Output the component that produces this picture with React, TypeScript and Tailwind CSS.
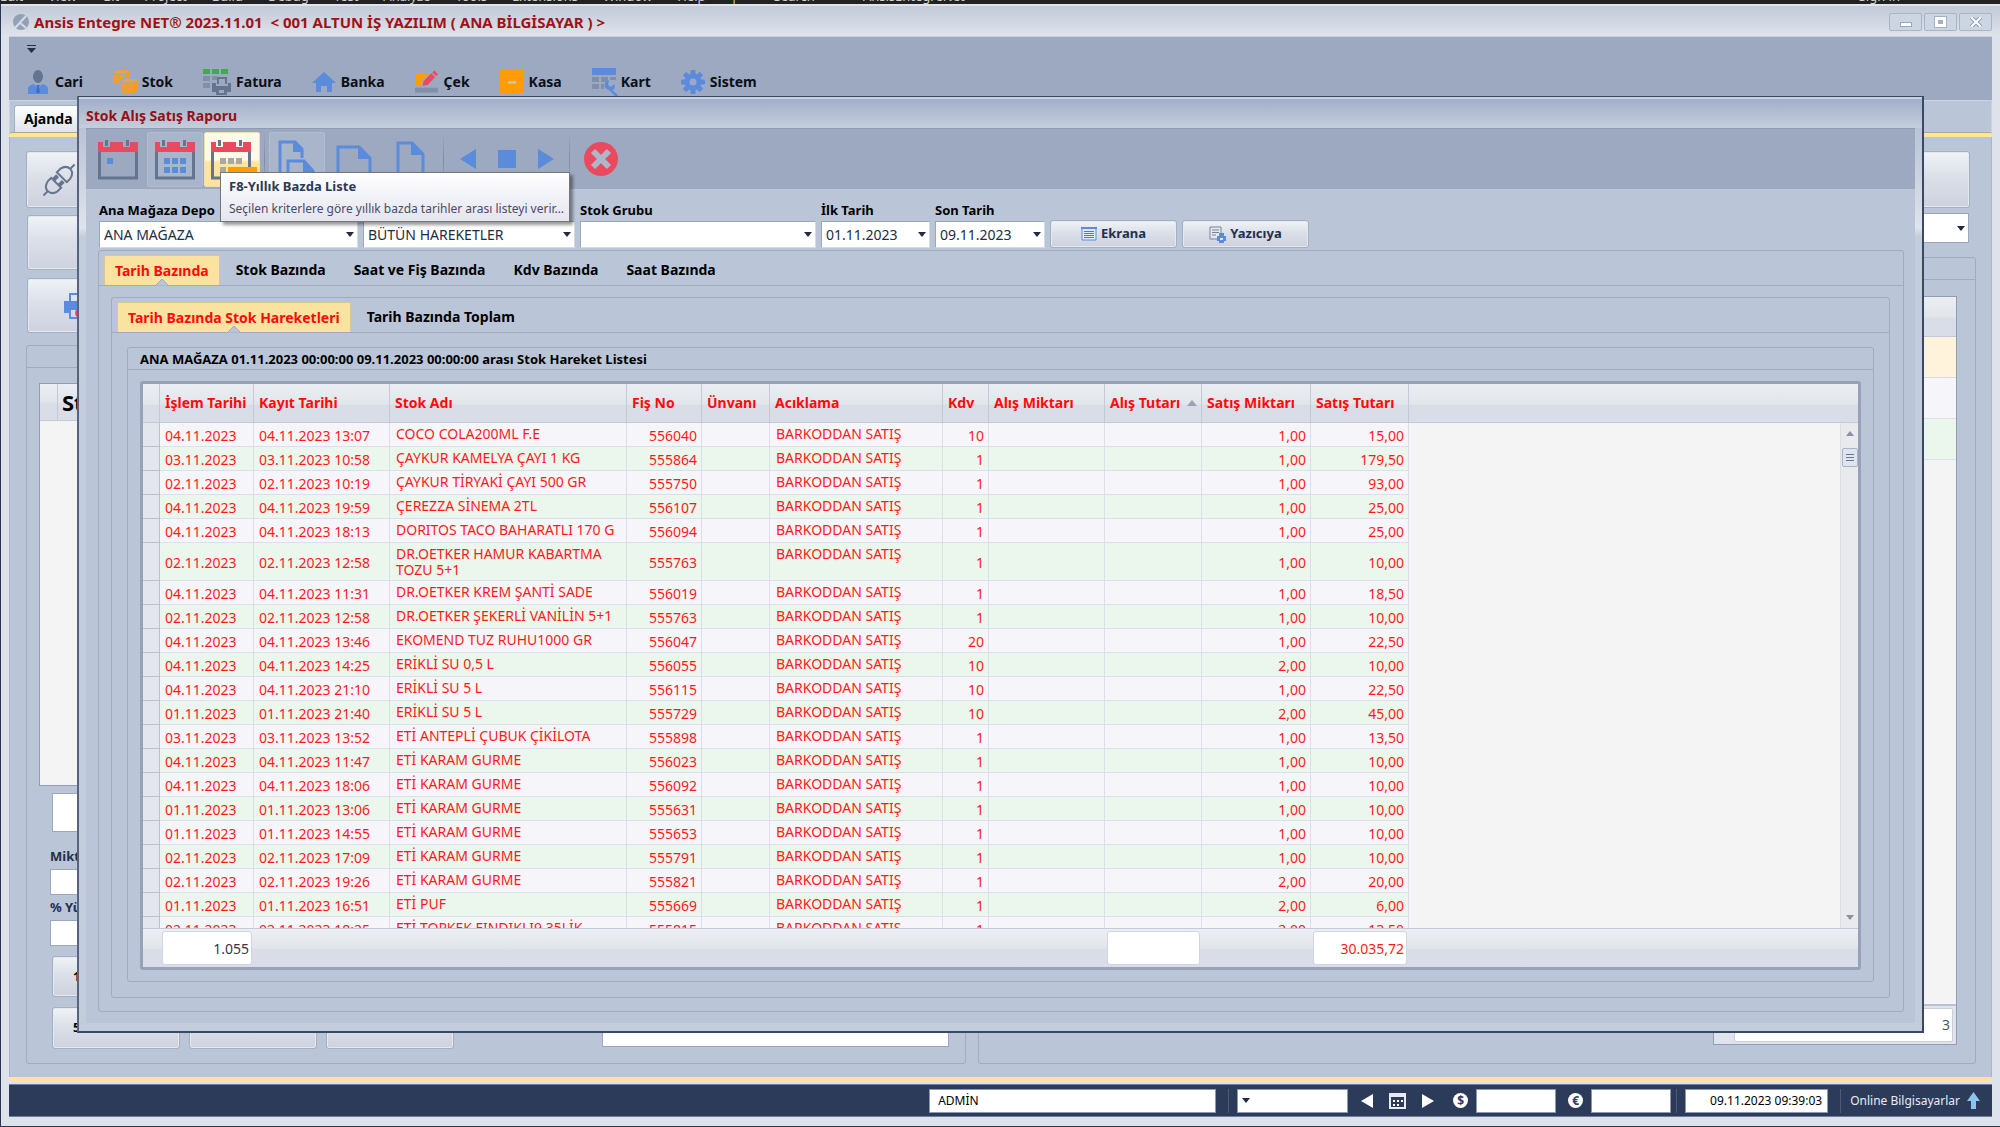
import React from 'react';

const BLUE = '#5b8bdc';
const SLATE = '#66758f';
const RED = '#ea4a5f';
const ORANGE = '#ff9c07';

const menuItems = [
    { label: 'Cari', icon: <UserIcon /> },
    { label: 'Stok', icon: <BoxesIcon /> },
    { label: 'Fatura', icon: <InvoiceIcon /> },
    { label: 'Banka', icon: <HomeIcon /> },
    { label: 'Çek', icon: <ChequeIcon /> },
    { label: 'Kasa', icon: <SafeIcon /> },
    { label: 'Kart', icon: <CardIcon /> },
    { label: 'Sistem', icon: <GearIcon /> },
];

const rows = [
    ['04.11.2023', '04.11.2023 13:07', 'COCO COLA200ML F.E', '556040', '10', '1,00', '15,00'],
    ['03.11.2023', '03.11.2023 10:58', 'ÇAYKUR KAMELYA ÇAYI 1 KG', '555864', '1', '1,00', '179,50'],
    ['02.11.2023', '02.11.2023 10:19', 'ÇAYKUR TİRYAKİ ÇAYI 500 GR', '555750', '1', '1,00', '93,00'],
    ['04.11.2023', '04.11.2023 19:59', 'ÇEREZZA SİNEMA 2TL', '556107', '1', '1,00', '25,00'],
    ['04.11.2023', '04.11.2023 18:13', 'DORITOS TACO BAHARATLI 170 G', '556094', '1', '1,00', '25,00'],
    ['02.11.2023', '02.11.2023 12:58', 'DR.OETKER HAMUR KABARTMA TOZU 5+1', '555763', '1', '1,00', '10,00'],
    ['04.11.2023', '04.11.2023 11:31', 'DR.OETKER KREM ŞANTİ SADE', '556019', '1', '1,00', '18,50'],
    ['02.11.2023', '02.11.2023 12:58', 'DR.OETKER ŞEKERLİ VANİLİN 5+1', '555763', '1', '1,00', '10,00'],
    ['04.11.2023', '04.11.2023 13:46', 'EKOMEND TUZ RUHU1000 GR', '556047', '20', '1,00', '22,50'],
    ['04.11.2023', '04.11.2023 14:25', 'ERİKLİ SU 0,5 L', '556055', '10', '2,00', '10,00'],
    ['04.11.2023', '04.11.2023 21:10', 'ERİKLİ SU 5 L', '556115', '10', '1,00', '22,50'],
    ['01.11.2023', '01.11.2023 21:40', 'ERİKLİ SU 5 L', '555729', '10', '2,00', '45,00'],
    ['03.11.2023', '03.11.2023 13:52', 'ETİ ANTEPLİ ÇUBUK ÇİKİLOTA', '555898', '1', '1,00', '13,50'],
    ['04.11.2023', '04.11.2023 11:47', 'ETİ KARAM GURME', '556023', '1', '1,00', '10,00'],
    ['04.11.2023', '04.11.2023 18:06', 'ETİ KARAM GURME', '556092', '1', '1,00', '10,00'],
    ['01.11.2023', '01.11.2023 13:06', 'ETİ KARAM GURME', '555631', '1', '1,00', '10,00'],
    ['01.11.2023', '01.11.2023 14:55', 'ETİ KARAM GURME', '555653', '1', '1,00', '10,00'],
    ['02.11.2023', '02.11.2023 17:09', 'ETİ KARAM GURME', '555791', '1', '1,00', '10,00'],
    ['02.11.2023', '02.11.2023 19:26', 'ETİ KARAM GURME', '555821', '1', '2,00', '20,00'],
    ['01.11.2023', '01.11.2023 16:51', 'ETİ PUF', '555669', '1', '2,00', '6,00'],
    ['02.11.2023', '02.11.2023 18:25', 'ETİ TOPKEK FINDIKLI9 35LİK', '555815', '1', '2,00', '13,50'],
];

const headers = ['İşlem Tarihi', 'Kayıt Tarihi', 'Stok Adı', 'Fiş No', 'Ünvanı', 'Acıklama', 'Kdv', 'Alış Miktarı', 'Alış Tutarı', 'Satış Miktarı', 'Satış Tutarı'];

const raised = 'border border-[#a3afc3] rounded-[3px] bg-gradient-to-b from-[#f0f3f6] via-[#d9dee7] to-[#cdd2df] shadow-[inset_0_0_0_1px_#e6eaf0]';
const panel = 'border border-[#9eabc0] rounded-[3px]';
const headFill = 'bg-gradient-to-b from-[#ebeff3] from-0% via-[#e2e6eb] via-50% to-[#d9dde7] to-55%';

function UserIcon() {
    return (
        <svg viewBox="0 0 24 24" className="w-6 h-6">
            <ellipse cx="12" cy="6.500" rx="5" ry="6.500" fill={SLATE} />
            <path d="M2 24v-5c0-3 3-4 6-5l4 5 4-5c3 1 6 2 6 5v5z" fill={BLUE} />
            <path d="M10 15h4l-1 2 1 5-2 2-2-2 1-5z" fill="#416fbd" />
        </svg>
    );
}

function BoxesIcon() {
    return (
        <svg viewBox="0 0 24 24" className="w-6 h-6">
            <path d="M0 4l11 1v9H0z" fill="#e9a034" />
            <path d="M1 3l3-3h12l-4 4z" fill="#e0a654" />
            <path d="M12 5l4-4v7h-4z" fill={ORANGE} />
            <path d="M7 11l5-3h12v16H7z" fill="#9ca9c1" />
            <path d="M8 13l12 1v10H8z" fill="#e9a034" />
            <path d="M9 12l3-3h12l-4 4z" fill="#e0a654" />
            <path d="M21 14l3-4v10l-3 4z" fill={ORANGE} />
        </svg>
    );
}

function InvoiceIcon() {
    return (
        <svg viewBox="0 0 28 26" className="w-7 h-[26px]">
            <path d="M0 0h7v5H0zM9 0h7v5H9zM18 0h7v5h-7z" fill="#46a84c" />
            <path d="M0 7h7v5H0zM0 14h7v5H0zM9 7h5v4H9z" fill="#8090ab" />
            <path d="M14 8h10v7h-2v-5h-6v5h-2z" fill={SLATE} />
            <path d="M9 14h4v3h12v-3h3v9h-4v3H13v-3H9z" fill={SLATE} />
            <path d="M16 21h5v3h-5z" fill="#9ca9c1" />
        </svg>
    );
}

function HomeIcon() {
    return (
        <svg viewBox="0 0 24 24" className="w-6 h-6">
            <path d="M12 2l12 11h-4v9h-5v-6H9v6H4v-9H0z" fill={BLUE} />
        </svg>
    );
}

function ChequeIcon() {
    return (
        <svg viewBox="0 0 25 24" className="w-6 h-6">
            <path d="M0 3h15L8 10l-1 5H0z" fill={ORANGE} />
            <path d="M0 18h24v5H0z" fill="#8090ab" />
            <path d="M8 16l1-5 8-8 4 4-8 8z" fill={RED} />
            <path d="M18 2l2-2 4 4-2 2z" fill={RED} />
        </svg>
    );
}

function SafeIcon() {
    return (
        <svg viewBox="0 0 24 24" className="w-6 h-6">
            <path d="M0 0h24v5H0zM0 6h24v18H0z" fill={ORANGE} />
            <path d="M8 11h8v3H8z" fill="#c9c3a8" />
        </svg>
    );
}

function CardIcon() {
    return (
        <svg viewBox="0 0 24 28" className="w-6 h-7 overflow-visible">
            <path d="M0 0h24v7H0z" fill={BLUE} />
            <path d="M0 9h7v5H0zM9 9h7v5H9zM18 9h6v3h-6zM0 16h7v5H0zM9 16h3v5H9z" fill="#8090ab" />
            <path d="M17 12l-1 5 3 2 3-3c2 3 0 6-2 6l6 5-2 2-7-7c-6-1-6-9 0-10z" fill={BLUE} />
        </svg>
    );
}

function GearIcon() {
    return (
        <svg viewBox="0 0 24 24" className="w-6 h-6">
            <g fill={BLUE}>
                {[0, 45, 90, 135].map((a) => (
                    <rect key={a} x="9.500" y="0" width="5" height="24" rx="1" transform={`rotate(${a} 12 12)`} />
                ))}
                <circle cx="12" cy="12" r="8.500" />
            </g>
            <circle cx="12" cy="12" r="3.500" fill="#9ca9c1" />
        </svg>
    );
}

const CalendarIcon = ({ days, dayColor = BLUE, bar = false }: { days: number[][]; dayColor?: string; bar?: boolean }) => (
    <svg viewBox="0 0 42 40" className="w-[42px] h-10 overflow-visible">
        <path d="M1 2h5v5h7V2h13v5h7V2h8v10H1z" fill={RED} />
        <path d="M8 0h3v6H8zM29 0h3v6h-3z" fill={SLATE} />
        <path d="M2.500 12v26h37V12" fill="none" stroke={SLATE} strokeWidth="3" />
        {days.map(([x, y]) => (
            <rect key={`${x}-${y}`} x={x} y={y} width="6" height="6" fill={dayColor} />
        ))}
        {bar && <path d="M18 27h29v13H18z" fill={ORANGE} />}
    </svg>
);

const monthDays = [[10, 18], [18, 18], [26, 18], [10, 27], [18, 27], [26, 27]];

const Caret = () => (
    <svg viewBox="0 0 8 5" className="w-2 h-[5px] mr-[3px] shrink-0 pointer-events-none">
        <path d="M0 0h8L4 5z" fill="#1f2b42" />
    </svg>
);

const Combo = ({ id, label, value, width }: { id: string; label?: string; value: string; width: string }) => (
    <div className={`${width} shrink-0`}>
        {label && <label htmlFor={id} className="block h-[18px] text-[13px] leading-[18px] font-bold text-black whitespace-nowrap">{label}</label>}
        <div className="mt-[2px] h-[27px] flex items-center bg-white border border-[#9aa7bd] border-r-[#d5dbe5] border-b-[#d5dbe5]">
            <select id={id} aria-label={label ?? 'Hareket türü'} className="flex-1 min-w-0 h-full pl-1 appearance-none outline-none text-sm text-[#222d42]">
                <option>{value}</option>
            </select>
            <Caret />
        </div>
    </div>
);

const Tabs = ({ items }: { items: string[] }) => (
    <div role="tablist" className="flex gap-1 pl-[5px] pt-1 border-b border-[#9eabc0]">
        {items.map((t, i) => (
            <button
                key={t}
                role="tab"
                aria-selected={i === 0}
                className={i === 0
                    ? 'relative h-[30px] px-[10px] rounded-t-[2px] border border-b-0 border-[#d9c78e] bg-[#fae2a0] text-sm font-bold text-[#ff0a0a]'
                    : 'h-[30px] px-3 text-sm font-bold text-black'}
            >
                {t}
                {i === 0 && (
                    <svg viewBox="0 0 14 8" className="absolute left-1/2 -bottom-px -ml-[7px] w-[14px] h-2">
                        <path d="M0 8l7-7 7 7z" fill="#bac6d8" stroke="#9eabc0" />
                    </svg>
                )}
            </button>
        ))}
    </div>
);

const Cols = () => (
    <colgroup>
        <col className="w-[17px]" />
        <col className="w-[94px]" />
        <col className="w-[136px]" />
        <col className="w-[237px]" />
        <col className="w-[75px]" />
        <col className="w-[68px]" />
        <col className="w-[173px]" />
        <col className="w-[46px]" />
        <col className="w-[116px]" />
        <col className="w-[97px]" />
        <col className="w-[109px]" />
        <col className="w-[98px]" />
        <col />
    </colgroup>
);

const tableBase = 'w-full table-fixed border-separate border-spacing-0';
const cell = 'h-6 pt-[3px] pb-0 pl-[5px] pr-1 border-r border-b border-[#dcdfea] leading-[18px] whitespace-nowrap';
const textCell = 'h-6 pt-[3px] pb-[2px] px-[6px] border-r border-b border-[#dcdfea] leading-4 align-top';

const StockGrid = () => (
    <div className="border-[3px] border-[#95a2b9] rounded-[3px] bg-[#f4f4f4] text-sm text-[#ff1a1a]">
        <table className={tableBase}>
            <Cols />
            <thead>
                <tr className={headFill}>
                    <th className="h-[39px] border-r border-b border-[#c3c9d9]" />
                    {headers.map((h) => (
                        <th key={h} className="h-[39px] pl-[5px] pr-1 border-r border-b border-[#c3c9d9] text-left font-bold text-[#ff0a0a] whitespace-nowrap">
                            {h === 'Alış Tutarı' ? (
                                <span className="flex items-center justify-between">
                                    {h}
                                    <svg viewBox="0 0 10 6" className="w-[10px] h-[6px]"><path d="M0 6h10L5 0z" fill="#9aa1b3" /></svg>
                                </span>
                            ) : h}
                        </th>
                    ))}
                    <th className="h-[39px] border-b border-[#c3c9d9]" />
                </tr>
            </thead>
        </table>
        <div className="flex h-[505px] overflow-hidden">
            <div className="flex-1">
                <table className={tableBase}>
                    <Cols />
                    <tbody>
                        {rows.map((r, i) => (
                            <tr key={i} className={i % 2 ? 'bg-[#ebf6ed]' : 'bg-[#f6f6fa]'}>
                                <td className="h-6 bg-[#e3e6ec] border-r border-b border-[#b9c1d1]" />
                                <td className={cell}>{r[0]}</td>
                                <td className={cell}>{r[1]}</td>
                                <td className={textCell}>{r[2]}</td>
                                <td className={`${cell} text-right`}>{r[3]}</td>
                                <td className={cell} />
                                <td className={textCell}>BARKODDAN SATIŞ</td>
                                <td className={`${cell} text-right`}>{r[4]}</td>
                                <td className={cell} />
                                <td className={cell} />
                                <td className={`${cell} text-right`}>{r[5]}</td>
                                <td className={`${cell} text-right`}>{r[6]}</td>
                                <td className="bg-[#f4f4f4]" />
                            </tr>
                        ))}
                    </tbody>
                </table>
            </div>
            <div className="w-[18px] flex flex-col items-center bg-[#e8eaed] border-l border-[#dcdee3] pt-2 pb-2">
                <svg viewBox="0 0 8 5" className="w-2 h-[5px]"><path d="M0 5h8L4 0z" fill="#8a91a5" /></svg>
                <div className="mt-3 w-4 h-[19px] flex flex-col justify-center items-center gap-[2px] rounded-[2px] border border-[#aab3c4] bg-[#dfe5ee]">
                    <span className="w-2 h-px bg-[#6c7690]" />
                    <span className="w-2 h-px bg-[#6c7690]" />
                    <span className="w-2 h-px bg-[#6c7690]" />
                </div>
                <svg viewBox="0 0 8 5" className="w-2 h-[5px] mt-auto"><path d="M0 0h8L4 5z" fill="#8a91a5" /></svg>
            </div>
        </div>
        <div className={`${headFill} border-t border-[#c3cbdb]`}>
            <table className={tableBase}>
                <Cols />
                <tbody>
                    <tr>
                        <td />
                        <td className="h-[38px] pl-[2px] pr-[2px]">
                            <div className="h-[34px] pr-[2px] leading-[34px] text-right rounded-[3px] border border-[#d0d5de] bg-white text-[#30394b]">1.055</div>
                        </td>
                        <td colSpan={6} />
                        <td />
                        <td className="pl-[2px] pr-[2px]"><div className="h-[34px] rounded-[3px] border border-[#d0d5de] bg-white" /></td>
                        <td />
                        <td className="pl-[2px] pr-[2px]">
                            <div className="h-[34px] pr-[2px] leading-[34px] text-right rounded-[3px] border border-[#d0d5de] bg-white">30.035,72</div>
                        </td>
                        <td />
                    </tr>
                </tbody>
            </table>
        </div>
    </div>
);

const ToolSeparator = () => <span className="w-px h-14 bg-gradient-to-b from-[#9ca9c1] via-[#7f8ca5] to-[#9ca9c1]" />;

const Toolbar = () => (
    <div className="h-[61px] flex items-start bg-[#9ca9c1] border-t border-[#8e9bb5] pt-[3px]">
        <button aria-label="Günlük" className="ml-[3px] w-[57px] h-[55px] flex justify-center items-center">
            <CalendarIcon days={[[10, 18]]} />
        </button>
        <button aria-label="Aylık" className="w-14 h-[55px] ml-px flex justify-center items-center border border-[#b3bdcf] bg-[#a9b5ca] rounded-[2px]">
            <CalendarIcon days={monthDays} />
        </button>
        <div className="relative ml-px">
            <button aria-label="F8-Yıllık Bazda Liste" className="w-14 h-[55px] pr-[2px] flex justify-center items-center rounded-[2px] border border-[#efe0b4] bg-gradient-to-b from-[#fff9e8] from-50% to-[#ffe59b] to-55%">
                <CalendarIcon days={monthDays} dayColor="#a9a8a6" bar />
            </button>
            <div role="tooltip" className="absolute z-10 left-4 top-10 w-[350px] h-[50px] border border-[#767676] bg-gradient-to-b from-white to-[#e4e5f0] shadow-[3px_3px_3px_rgba(0,0,0,0.4)] px-2 pt-[3px] text-[#2b3a55] whitespace-nowrap">
                <p className="text-[13px] leading-5 font-bold">F8-Yıllık Bazda Liste</p>
                <p className="mt-[3px] text-xs leading-5 text-[#4a4a68]">Seçilen kriterlere göre yıllık bazda tarihler arası listeyi verir…</p>
            </div>
        </div>
        <span className="w-[9px] flex justify-center"><ToolSeparator /></span>
        <button aria-label="Kopyala" className="w-14 h-[55px] flex justify-center items-center border border-[#b3bdcf] bg-[#a9b5ca] rounded-[2px]">
            <svg viewBox="0 0 38 42" className="w-[38px] h-[42px]">
                <path d="M9 36H2V3h15l7 7v9M10 42V22h16l9 10v10" fill="none" stroke={BLUE} strokeWidth="3" />
                <path d="M15 2v11h11zM25 21v12h12z" fill={BLUE} />
            </svg>
        </button>
        <button aria-label="Yatay sayfa" className="ml-[11px] mt-3">
            <svg viewBox="0 0 36 32" className="w-9 h-8">
                <path d="M2 32V3h21l11 11v18M2 30h32" fill="none" stroke={BLUE} strokeWidth="3" />
                <path d="M22 2v13h13z" fill={BLUE} />
            </svg>
        </button>
        <button aria-label="Dikey sayfa" className="ml-6 mt-2">
            <svg viewBox="0 0 30 40" className="w-[30px] h-10">
                <path d="M2 40V3h14l11 11v26M2 38h25" fill="none" stroke={BLUE} strokeWidth="3" />
                <path d="M15 2v13h13z" fill={BLUE} />
            </svg>
        </button>
        <span className="w-[34px] flex justify-center"><ToolSeparator /></span>
        <button aria-label="Önceki" className="mt-[17px]"><svg viewBox="0 0 16 20" className="w-4 h-5"><path d="M16 0v20L0 10z" fill={BLUE} /></svg></button>
        <button aria-label="Durdur" className="ml-[22px] mt-[18px]"><svg viewBox="0 0 18 18" className="w-[18px] h-[18px]"><path d="M0 0h18v18H0z" fill={BLUE} /></svg></button>
        <button aria-label="Sonraki" className="ml-[22px] mt-[17px]"><svg viewBox="0 0 16 20" className="w-4 h-5"><path d="M0 0v20l16-10z" fill={BLUE} /></svg></button>
        <span className="w-[30px] flex justify-center"><ToolSeparator /></span>
        <button aria-label="Kapat" className="mt-[10px]">
            <svg viewBox="0 0 34 34" className="w-[34px] h-[34px]">
                <circle cx="17" cy="17" r="17" fill={RED} />
                <path d="M9 9l16 16M25 9L9 25" stroke="#aeb6c9" strokeWidth="6" />
            </svg>
        </button>
    </div>
);

const ReportDialog = () => (
    <section role="dialog" aria-label="Stok Alış Satış Raporu" className="absolute left-[77px] right-[76px] top-24 border-2 border-t border-[#3a4868] border-l-[#56647f] bg-gradient-to-b from-[#b4bfd3] from-2% via-[#dfe4ec] via-14% to-[#c3ccdb] to-15%">
        <h2 className="h-[31px] pl-[7px] pt-px border-t-2 border-[#c9d1df] bg-gradient-to-b from-[#a2afc9] to-[#c5cedc] text-sm leading-8 font-bold text-[#960f17]">Stok Alış Satış Raporu</h2>
        <div className="mx-[7px] mb-2 pb-[11px] bg-[#bac6d8]">
            <Toolbar />
            <div className="pl-[13px] pt-3 flex items-end gap-[5px]">
                <Combo id="depo" label="Ana Mağaza Depo" value="ANA MAĞAZA" width="w-[259px]" />
                <Combo id="hareket" value="BÜTÜN HAREKETLER" width="w-[212px]" />
                <Combo id="grup" label="Stok Grubu" value="" width="w-[236px]" />
                <Combo id="ilk" label="İlk Tarih" value="01.11.2023" width="w-[109px]" />
                <Combo id="son" label="Son Tarih" value="09.11.2023" width="w-[110px]" />
                <button className={`${raised} w-[127px] h-7 flex items-center justify-center gap-1 text-[13px] font-bold text-[#22304e]`}>
                    <svg viewBox="0 0 16 14" className="w-4 h-[14px]">
                        <path d="M1 1h14v12H1z" fill="#e5eaf2" stroke={BLUE} />
                        <path d="M0 0h16v2H0z" fill={BLUE} />
                        <path d="M3 4.500h10M3 6.500h10M3 8.500h10M3 10.500h10" stroke="#6a7890" />
                    </svg>
                    Ekrana
                </button>
                <button className={`${raised} w-[127px] h-7 flex items-center justify-center gap-1 text-[13px] font-bold text-[#22304e]`}>
                    <svg viewBox="0 0 17 17" className="w-[17px] h-[17px]">
                        <path d="M1 1h11v12H1z" fill="#e5eaf2" stroke="#77839a" />
                        <path d="M3 4h7M3 6.500h7M3 9h4" stroke="#77839a" />
                        <path d="M8 10h9v5H8zM10 7h5v3h-5zM10 15h5v2h-5z" fill={BLUE} />
                        <path d="M11 12h3v2h-3z" fill="#dbe6f7" />
                    </svg>
                    Yazıcıya
                </button>
            </div>
            <div className={`${panel} mt-[2px] ml-3 mr-[11px]`}>
                <Tabs items={['Tarih Bazında', 'Stok Bazında', 'Saat ve Fiş Bazında', 'Kdv Bazında', 'Saat Bazında']} />
                <div className={`${panel} ml-3 mr-[13px] mt-[11px] mb-[13px]`}>
                    <Tabs items={['Tarih Bazında Stok Hareketleri', 'Tarih Bazında Toplam']} />
                    <div className={`${panel} mx-[15px] mt-[14px] mb-[15px]`}>
                        <h3 className="h-[22px] pl-3 border-b border-[#9eabc0] text-[13px] leading-[22px] font-bold text-black">ANA MAĞAZA 01.11.2023 00:00:00 09.11.2023 00:00:00 arası Stok Hareket Listesi</h3>
                        <div className="mx-3 my-[11px]">
                            <StockGrid />
                        </div>
                    </div>
                </div>
            </div>
        </div>
    </section>
);

const SideField = ({ label, id }: { label: string; id: string }) => (
    <div className="ml-[23px] mt-1">
        <label htmlFor={id} className="block text-[13px] leading-4 font-bold text-[#22304e]">{label}</label>
        <input id={id} className="mt-[5px] block w-40 h-[26px] bg-white border border-[#9aa7bd]" />
    </div>
);

const Workspace = () => (
    <main className="flex-1 flex gap-3 pl-4 pr-[15px] pt-[14px] pb-[13px] border-x border-[#a9b5c9] bg-[#bac6d8]">
        <div className="flex-[940_1_0%] min-w-0 flex flex-col">
            <button aria-label="Bağlantı" className={`${raised} w-[200px] h-[57px] pl-[14px] flex items-center`}>
                <svg viewBox="0 0 36 36" className="w-9 h-9" fill="none" stroke={SLATE} strokeWidth="2">
                    <g transform="rotate(-45 18 18)">
                        <path d="M-4 18h6" />
                        <path d="M14 11v14H9c-9-2-9-12 0-14z" />
                        <path d="M14 14h6M14 22h6" strokeWidth="4" />
                        <path d="M22 11v14h5c9-2 9-12 0-14z" />
                        <path d="M34 18h6" />
                    </g>
                </svg>
            </button>
            <button aria-label="Kayıt" className={`${raised} ml-px mt-[7px] w-[200px] h-[55px]`} />
            <button aria-label="Yazdır" className={`${raised} ml-px mt-2 w-[200px] h-[55px] pl-[35px] flex items-center`}>
                <svg viewBox="0 0 28 26" className="w-7 h-[26px]">
                    <path d="M7 9V1h13l4 4v4M7 17v8h14v-8" fill="none" stroke={BLUE} strokeWidth="2" />
                    <path d="M1 8h26v12h-6v-3H7v3H1z" fill={BLUE} />
                    <circle cx="17" cy="20" r="5" fill={RED} />
                </svg>
            </button>
            <div className={`${panel} mt-3 flex-1`}>
                <div className="h-[22px] border-b border-[#9eabc0]" />
                <div className="mt-[15px] ml-3 w-[800px] h-[403px] bg-[#f4f4f4] border border-[#8f9db5]">
                    <div className={`${headFill} h-[37px] flex border-b border-[#c3c9d9]`}>
                        <span className="w-[18px] border-r border-[#c3c9d9]" />
                        <span className="pl-1 text-[22px] leading-9 font-bold text-black">Stok Adı</span>
                    </div>
                </div>
                <input aria-label="Barkod" className="mt-[7px] ml-[25px] block w-40 h-[39px] bg-white border border-[#9aa7bd]" />
                <div className="h-3" />
                <SideField label="Miktar" id="miktar" />
                <SideField label="% Yüzde" id="yuzde" />
                <button className={`${raised} mt-[10px] ml-[25px] block w-[127px] h-[41px] pl-5 text-left text-[13px] font-bold text-black`}>1</button>
                <div className="mt-[10px] ml-[25px] mr-[16px] flex items-end gap-[9px]">
                    <button className={`${raised} w-[128px] h-[42px] pl-5 text-left text-[13px] font-bold text-black`}>5</button>
                    <button aria-label="10" className={`${raised} w-[128px] h-[42px]`} />
                    <button aria-label="20" className={`${raised} w-[128px] h-[42px]`} />
                    <input aria-label="Toplam" className="ml-auto w-[347px] h-10 mb-[2px] bg-white border border-[#9aa7bd]" />
                </div>
            </div>
        </div>
        <div className="flex-[998_1_0%] min-w-0 flex flex-col">
            <button aria-label="Rapor" className={`${raised} self-end mr-[6px] w-[200px] h-[57px]`} />
            <div className="self-end mr-[7px] mt-[5px] w-[200px] h-[30px] flex items-center bg-white border border-[#9aa7bd]">
                <select aria-label="Filtre" className="flex-1 h-full appearance-none outline-none"><option></option></select>
                <Caret />
            </div>
            <div className={`${panel} mt-[14px] flex-1 flex flex-col`}>
                <div className="h-[22px] border-b border-[#9eabc0]" />
                <div className="mt-4 mb-[18px] ml-auto mr-[18px] w-[244px] flex-1 flex flex-col border border-[#8f9db5] bg-[#f4f4f4]">
                    <div className={`${headFill} h-10 border-b border-[#c3c9d9]`} />
                    <div className="h-[41px] bg-[#fff4db] border-b border-[#d9dbe6]" />
                    <div className="h-[41px] bg-[#f6f6fa] border-b border-[#dcdfea]" />
                    <div className="h-[41px] bg-[#ebf6ed] border-b border-[#dcdfea]" />
                    <div className="mt-auto h-10 pl-5 pr-[3px] pt-[2px] border-t-2 border-[#b9c1d1] bg-[#dfe3ea]">
                        <div className="h-[34px] pr-[2px] leading-8 text-right text-sm text-[#4c566a] bg-white border border-[#c9ced8] rounded-[2px]">3</div>
                    </div>
                </div>
            </div>
        </div>
    </main>
);

const barField = 'h-6 bg-white border border-[#8b98b1] outline-none text-xs text-black';

const StatusBar = () => (
    <footer className="mt-[2px] h-[33px] flex items-center justify-end pr-3 bg-[#2c3b5a] border-y border-[#6f7f9b] text-xs text-white">
        <input aria-label="Kullanıcı" defaultValue="ADMİN" className={`${barField} w-[287px] pl-2`} />
        <span className="ml-3 w-px h-6 bg-[#4d5b79]" />
        <div className={`${barField} ml-2 w-[111px] flex items-center pl-1`}>
            <Caret />
            <select aria-label="Döviz tarihi" className="flex-1 h-full appearance-none outline-none"><option></option></select>
        </div>
        <button aria-label="Önceki gün" className="ml-[13px]"><svg viewBox="0 0 12 14" className="w-3 h-[14px]"><path d="M12 0v14L0 7z" fill="#fff" /></svg></button>
        <button aria-label="Takvim" className="ml-4">
            <svg viewBox="0 0 17 16" className="w-[17px] h-4">
                <path d="M1 1h15v14H1z" fill="none" stroke="#e6eaf2" strokeWidth="2" />
                <path d="M0 0h17v4H0z" fill="#e6eaf2" />
                <path d="M4 7h2v2H4zM8 7h2v2H8zM12 7h2v2h-2zM4 11h2v2H4zM8 11h2v2H8z" fill="#fff" />
            </svg>
        </button>
        <button aria-label="Sonraki gün" className="ml-4"><svg viewBox="0 0 12 14" className="w-3 h-[14px]"><path d="M0 0v14l12-7z" fill="#fff" /></svg></button>
        <label htmlFor="usd" className="ml-[19px] w-[15px] h-[15px] rounded-full bg-white text-[#2c3b5a] text-xs leading-[15px] font-bold text-center">$</label>
        <input id="usd" className={`${barField} ml-2 w-20`} />
        <label htmlFor="eur" className="ml-3 w-[15px] h-[15px] rounded-full bg-white text-[#2c3b5a] text-xs leading-[15px] font-bold text-center">€</label>
        <input id="eur" className={`${barField} ml-2 w-20`} />
        <span className="ml-[5px] w-px h-6 bg-[#4d5b79]" />
        <input aria-label="Tarih" defaultValue="09.11.2023 09:39:03" className={`${barField} ml-2 w-[143px] pr-[5px] text-right`} />
        <span className="ml-3 w-px h-6 bg-[#4d5b79]" />
        <a href="#" className="ml-[9px] flex items-center gap-[7px] whitespace-nowrap text-[#e8ecf4]">
            Online Bilgisayarlar
            <svg viewBox="0 0 13 17" className="w-[13px] h-[17px]"><path d="M6.500 0L13 9H9v8H4V9H0z" fill="#8cc4ee" /></svg>
        </a>
    </footer>
);

const winButton = 'w-[33px] h-[18px] flex items-center justify-center rounded-[2px] border border-[#a9b4c8] bg-[#ccd5e2]';

const ideMenu = ['Edit', 'View', 'Git', 'Project', 'Build', 'Debug', 'Test', 'Analyze', 'Tools', 'Extensions', 'Window', 'Help'];

const App = () => (
    <div className="relative min-h-screen flex flex-col bg-[#dde2eb] font-['Noto_Sans','DejaVu_Sans',sans-serif]">
        <div className="h-1 overflow-hidden bg-[#222] text-[#d0d0d0] text-[13px]">
            <div className="-mt-[13px] flex leading-[18px] whitespace-nowrap">
                {ideMenu.map((m) => <span key={m} className="mr-[25px]">{m}</span>)}
                <span className="mr-9">|</span>
                <span>Search</span>
                <span className="ml-12">AnsisEntegreNet</span>
                <span className="ml-auto mr-[100px]">Sign in</span>
            </div>
        </div>
        <div className="flex-1 flex flex-col px-2 pb-[9px] border-l border-b border-[#2b3650]">
            <header className="-mx-2 h-8 pl-3 pr-2 pt-[2px] flex items-center border-t-2 border-[#dfe4ec] bg-gradient-to-b from-[#c2cad8] to-[#dfe3eb]">
                <svg viewBox="0 0 16 16" className="w-4 h-4">
                    <circle cx="8" cy="8" r="8" fill="#93a1b8" />
                    <path d="M2 14L13 2M6 8l7 6" stroke="#d5dbe6" strokeWidth="2" />
                </svg>
                <h1 className="ml-[5px] text-[15px] font-bold text-[#a01218] whitespace-pre">{'Ansis Entegre NET® 2023.11.01  < 001 ALTUN İŞ YAZILIM ( ANA BİLGİSAYAR ) >'}</h1>
                <div className="ml-auto flex gap-[2px]">
                    <button aria-label="Küçült" className={winButton}><span className="w-3 h-[5px] mt-1 border border-[#9aa6bb] bg-white" /></button>
                    <button aria-label="Büyüt" className={winButton}><span className="w-[11px] h-[10px] border-[3px] border-white outline outline-[#a5b0c4] bg-[#a5b0c4]" /></button>
                    <button aria-label="Kapat" className={winButton}>
                        <svg viewBox="0 0 12 10" className="w-3 h-[10px]"><path d="M1 0l10 10M11 0L1 10" stroke="#8f9bb2" strokeWidth="4" /><path d="M1 0l10 10M11 0L1 10" stroke="#fff" strokeWidth="2" /></svg>
                    </button>
                </div>
            </header>
            <nav className="h-16 bg-[#9ca9c1] border-t border-[#c9d0dc]">
                <button aria-label="Hızlı erişim" className="ml-[18px] mt-2 block">
                    <svg viewBox="0 0 9 8" className="w-[9px] h-2"><path d="M0 0h9v1H0zM0 3h9L4.500 8z" fill="#22304e" /></svg>
                </button>
                <div className="mt-[15px] ml-[17px] h-7 flex items-center gap-[30px]">
                    {menuItems.map((m) => (
                        <button key={m.label} className="flex items-center gap-[5px] text-sm font-bold text-[#0b0f16]">
                            {m.icon}
                            {m.label}
                        </button>
                    ))}
                </div>
            </nav>
            <div className="h-8 pl-1 flex items-end bg-[#bac6d8] border-x border-t border-[#c9d2e0]">
                <button className="h-[27px] w-[90px] px-[9px] text-left rounded-t-[3px] border border-b-0 border-[#a3afc3] bg-gradient-to-b from-white to-[#dfe3ea] text-sm font-bold text-black">Ajanda</button>
            </div>
            <div className="h-[5px] rounded-t-[2px] bg-[#ffe49c] border-t border-[#b0a988]" />
            <Workspace />
            <div className="h-[5px] rounded-b-[2px] bg-[#ffe49c]" />
            <StatusBar />
        </div>
        <ReportDialog />
    </div>
);

export default App;
